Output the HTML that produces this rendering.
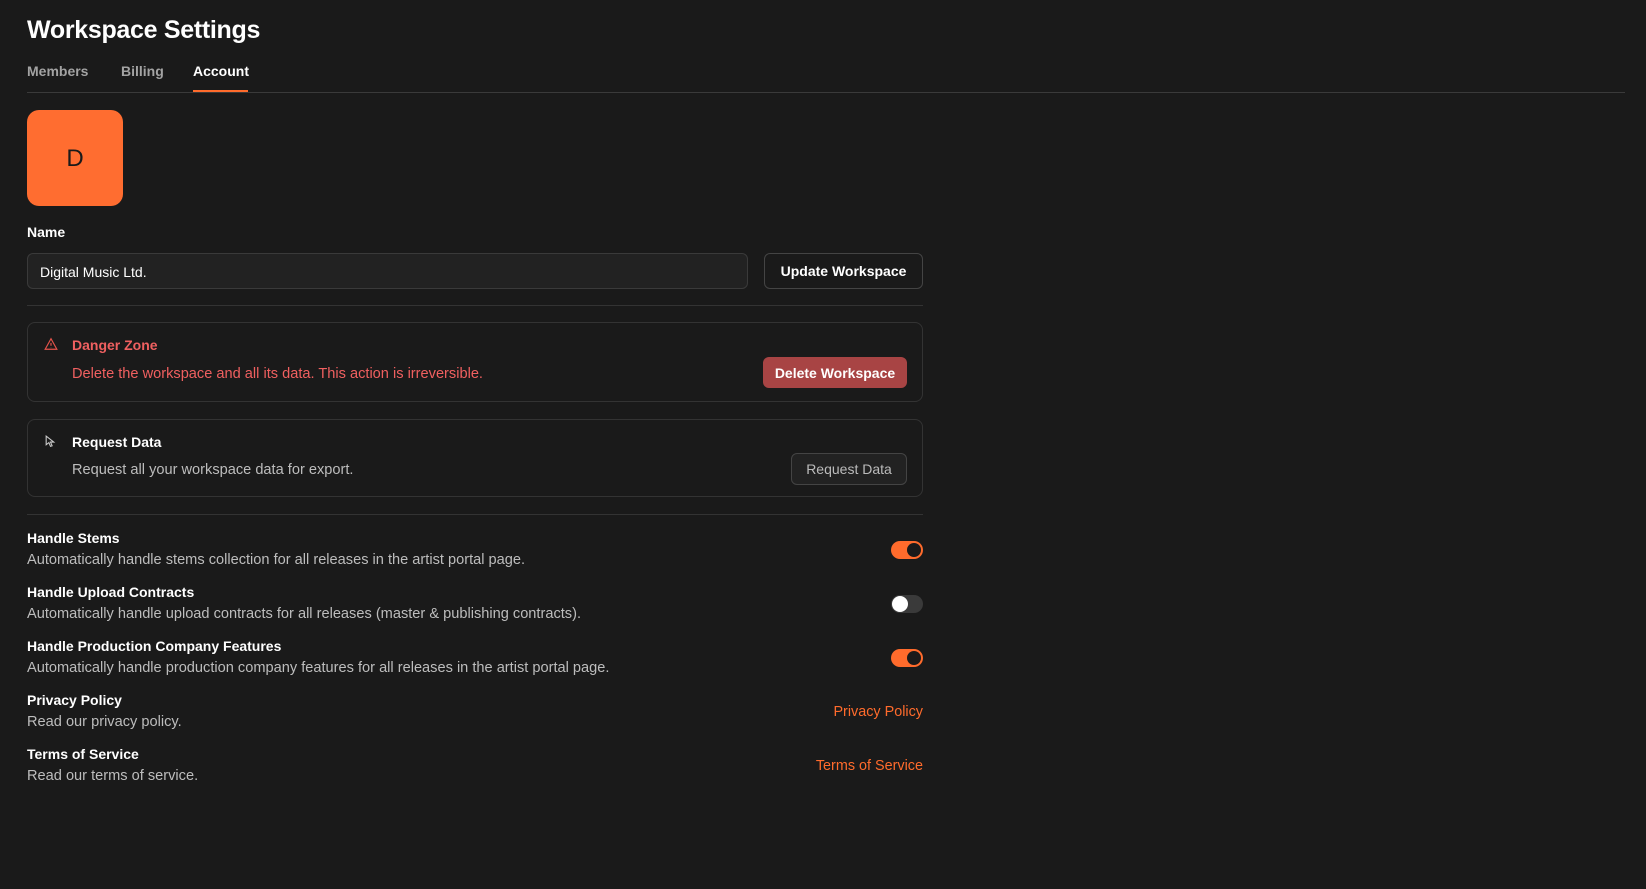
<!DOCTYPE html>
<html><head><meta charset="utf-8"><style>
*{box-sizing:border-box;margin:0;padding:0}
body{width:1646px;height:889px;background:#1a1a1a;color:#fff;font-family:"Liberation Sans",sans-serif;position:relative;overflow:hidden}
.a{position:absolute}
h1{position:absolute;left:27px;top:16px;font-size:25px;font-weight:700;letter-spacing:-0.3px}
.tab{position:absolute;top:63px;font-size:14px;color:#a3a3a3;font-weight:600}
.box{position:absolute;left:27px;width:896px;border:1px solid #333;border-radius:8px}
.t{font-size:14px;font-weight:700;color:#fff}
.d{font-size:14.6px;color:#bdbdbd;margin-top:6px}
.tg{position:absolute;left:891px;width:32px;height:18px;border-radius:9px}
.on{background:#ff6b2c}
.on::after{content:"";position:absolute;right:2px;top:2px;width:14px;height:14px;border-radius:50%;background:#1a1a1a}
.off{background:#3a3a3a}
.off::after{content:"";position:absolute;left:1px;top:1px;width:16px;height:16px;border-radius:50%;background:#fff}
.lnk{position:absolute;right:723px;color:#ff6b2c;font-size:14.4px}
</style></head><body>
<h1>Workspace Settings</h1>
<div class="tab" style="left:27px">Members</div>
<div class="tab" style="left:121px">Billing</div>
<div class="tab" style="left:193px;color:#fff">Account</div>
<div class="a" style="left:27px;top:92px;width:1598px;height:1px;background:#3a3a3a"></div>
<div class="a" style="left:193px;top:90px;width:55px;height:2px;background:#ff6b2c"></div>
<div class="a" style="left:27px;top:110px;width:96px;height:96px;border-radius:12px;background:#ff6d30;color:#1a1a1a;font-size:24px;display:flex;align-items:center;justify-content:center;padding-top:2px">D</div>
<div class="a t" style="left:27px;top:224px">Name</div>
<div class="a" style="left:27px;top:253px;width:721px;height:36px;border:1px solid #3a3a3a;border-radius:6px;background:#222;font-size:14px;padding:10px 12px">Digital Music Ltd.</div>
<div class="a" style="left:764px;top:253px;width:159px;height:36px;border:1px solid #444;border-radius:6px;font-size:14px;font-weight:700;display:flex;align-items:center;justify-content:center">Update Workspace</div>
<div class="a" style="left:27px;top:305px;width:896px;height:1px;background:#333"></div>
<div class="box" style="top:322px;height:80px">
<svg class="a" style="left:16px;top:14px" width="14" height="14" viewBox="0 0 24 24" fill="none" stroke="#e5534b" stroke-width="2"><path d="M12 3L2 21h20z"/><path d="M12 10v5M12 18v.5"/></svg>
<div class="a" style="left:44px;top:14px;font-size:14px;color:#f06060;font-weight:600">Danger Zone</div>
<div class="a" style="left:44px;top:43px;font-size:14.6px;color:#f06060">Delete the workspace and all its data. This action is irreversible.</div>
<div class="a" style="left:735px;top:34px;width:144px;height:31px;border-radius:6px;background:#a84444;font-size:14px;font-weight:700;display:flex;align-items:center;justify-content:center">Delete Workspace</div>
</div>
<div class="box" style="top:419px;height:78px">
<svg class="a" style="left:16px;top:14px" width="13" height="15" viewBox="0 0 24 24" fill="none" stroke="#ccc" stroke-width="2"><path d="M4 2v16l5-4 3 7 3-1-3-7h6z"/></svg>
<div class="a t" style="left:44px;top:14px;font-weight:600">Request Data</div>
<div class="a" style="left:44px;top:42px;font-size:14.6px;color:#bdbdbd">Request all your workspace data for export.</div>
<div class="a" style="left:763px;top:33px;width:116px;height:32px;border:1px solid #444;border-radius:6px;background:#222;font-size:14px;color:#bbb;display:flex;align-items:center;justify-content:center">Request Data</div>
</div>
<div class="a" style="left:27px;top:514px;width:896px;height:1px;background:#333"></div>
<div class="a" style="left:27px;top:530px"><div class="t">Handle Stems</div><div class="d">Automatically handle stems collection for all releases in the artist portal page.</div></div>
<div class="tg on" style="top:541px"></div>
<div class="a" style="left:27px;top:584px"><div class="t">Handle Upload Contracts</div><div class="d">Automatically handle upload contracts for all releases (master &amp; publishing contracts).</div></div>
<div class="tg off" style="top:595px"></div>
<div class="a" style="left:27px;top:638px"><div class="t">Handle Production Company Features</div><div class="d">Automatically handle production company features for all releases in the artist portal page.</div></div>
<div class="tg on" style="top:649px"></div>
<div class="a" style="left:27px;top:692px"><div class="t">Privacy Policy</div><div class="d">Read our privacy policy.</div></div>
<div class="lnk" style="top:704px">Privacy Policy</div>
<div class="a" style="left:27px;top:746px"><div class="t">Terms of Service</div><div class="d">Read our terms of service.</div></div>
<div class="lnk" style="top:758px">Terms of Service</div>
</body></html>
